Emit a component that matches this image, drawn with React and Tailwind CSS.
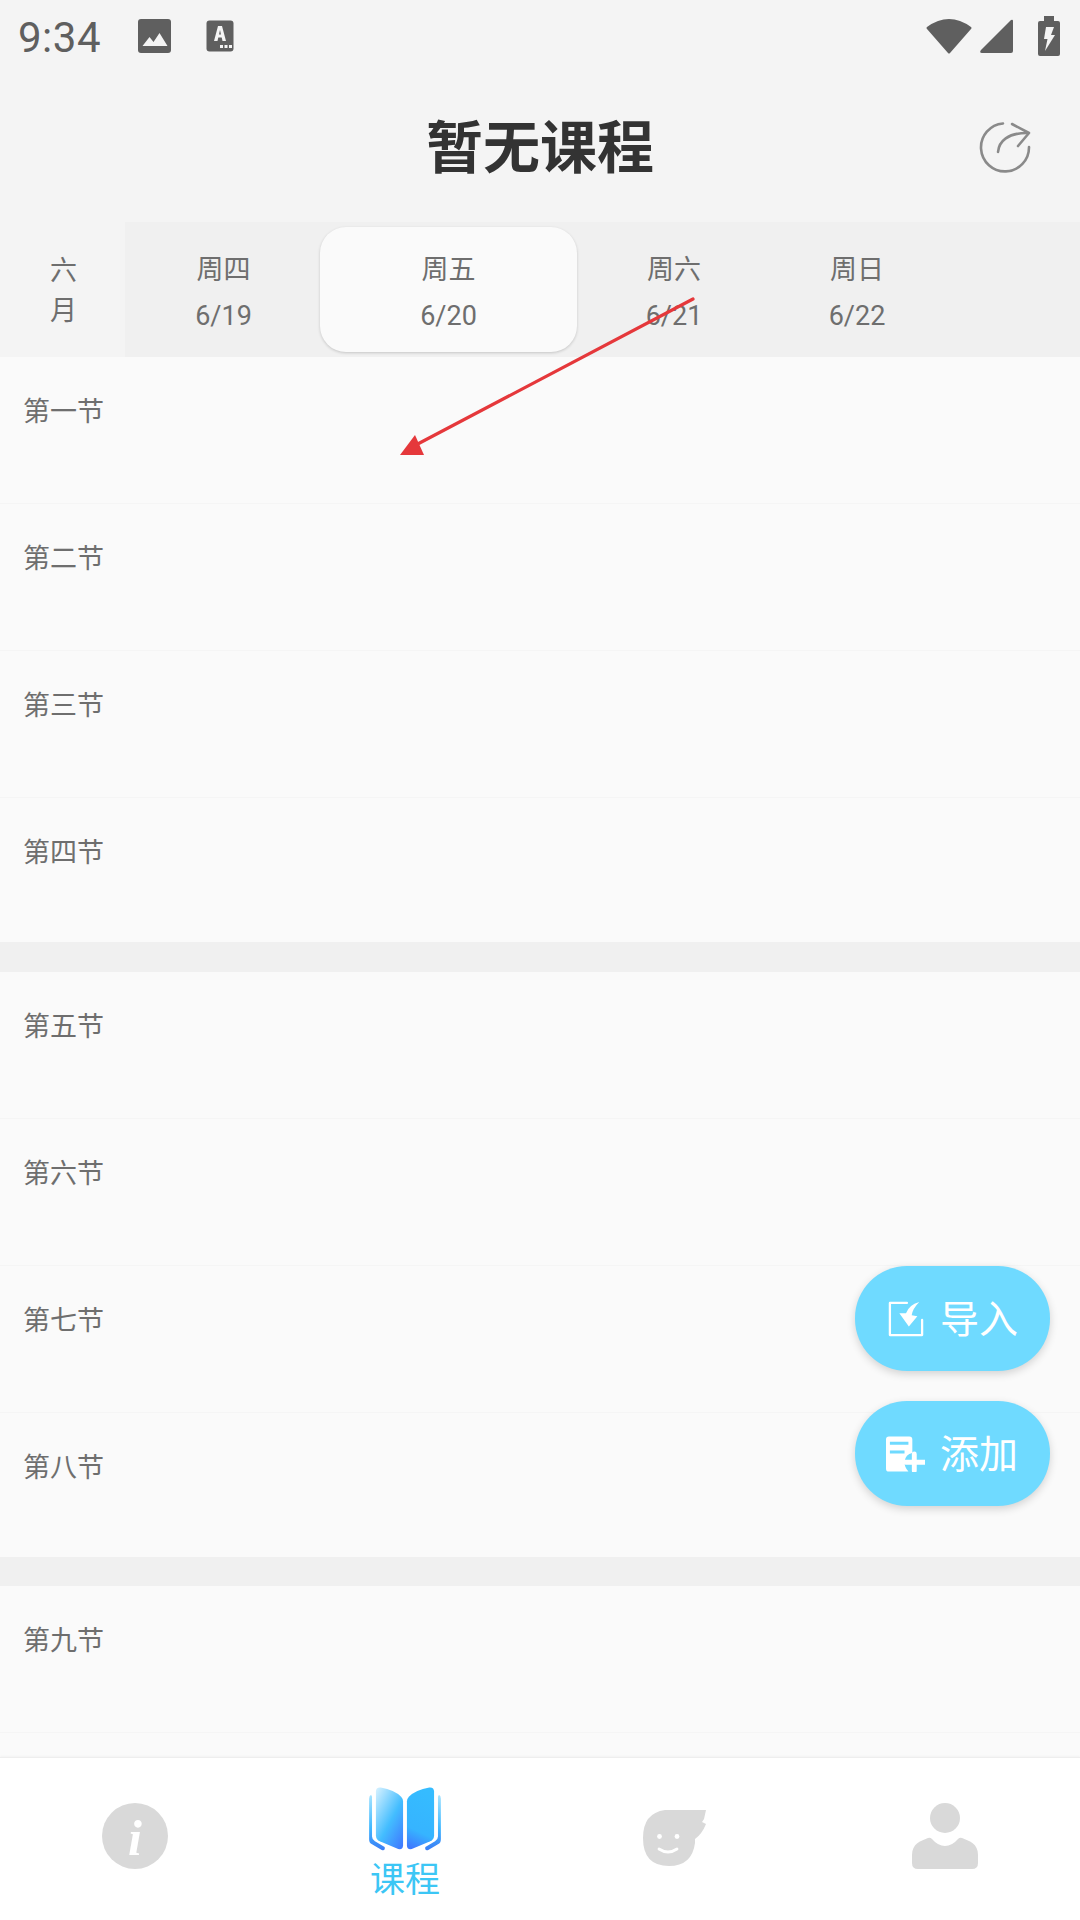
import React from 'react';

const cjk = "font-['Roboto','Noto_Sans_CJK_SC',sans-serif]";

function StatusBar() {
  return (
    <div className="h-[72px] flex items-center pl-[18px] pr-[20px] text-[#5f5f5f]">
      <span className="text-[42px] leading-none font-['Roboto',sans-serif] tracking-[0.5px] mt-[4px]">9:34</span>
      <svg className="ml-[36px]" width="35" height="36" viewBox="0 0 34 36">
        <rect x="0.5" y="1" width="33" height="34" rx="3" fill="#5f5f5f" />
        <path d="M5 28 L12 19 L16 24 L22 15 L30 28 Z" fill="#f4f4f4" />
      </svg>
      <svg className="ml-[34px]" width="28" height="32" viewBox="0 0 28 32">
        <rect x="0.5" y="0.5" width="27" height="31" rx="3" fill="#5f5f5f" />
        <path d="M8 21 L12 6 H16 L20 21 H16.5 L15.7 17.5 H12.3 L11.5 21 Z M13 14.5 H15 L14 10 Z" fill="#f4f4f4" fillRule="evenodd" />
        <path d="M14 25 h3 v3 h-3z M18.5 25 h3 v3 h-3z M23 25 h3 v3 h-3z" fill="#f4f4f4" />
      </svg>
      <div className="ml-auto flex items-center">
        <svg width="46" height="38" viewBox="0 0 46 38">
          <path d="M1 10 Q23 -6 45 10 Q46 11 45 12 L24 36 Q23 37 22 36 L1 12 Q0 11 1 10 Z" fill="#5f5f5f" />
        </svg>
        <svg className="ml-[8px]" width="34" height="36" viewBox="0 0 34 36">
          <path d="M1 32 L31 2 Q33 1 33 3 V33 Q33 35 31 35 H2 Q-1 35 1 32 Z" fill="#5f5f5f" />
        </svg>
        <svg className="ml-[24px]" width="22" height="40" viewBox="0 0 22 40">
          <path d="M6 0 H16 V5 H20 Q22 5 22 7 V38 Q22 40 20 40 H2 Q0 40 0 38 V7 Q0 5 2 5 H6 Z" fill="#5f5f5f" />
          <path d="M8 11 H16 L13 19 H17 L7 35 L9.5 23 H6 Z" fill="#f4f4f4" />
        </svg>
      </div>
    </div>
  );
}

function Header() {
  return (
    <div className="h-[150px] relative flex items-center justify-center">
      <span className={`text-[57px] leading-none font-bold text-[#333333] mt-[3px] ${cjk}`}>暂无课程</span>
      <svg className="absolute right-[48px] top-[49px]" width="54" height="54" viewBox="0 0 54 54" fill="none" stroke="#8a8a8a" strokeWidth="2.6" strokeLinecap="round">
        <path d="M25 2.5 A24 24 0 1 0 51 26" />
        <path d="M34 3 L51 12 L40 25" strokeLinejoin="round" />
        <path d="M20 31 C21 20 30 12 49 12" />
      </svg>
    </div>
  );
}

function WeekStrip() {
  return (
    <div className={`h-[135px] flex text-[#6e6e6e] ${cjk}`}>
      <div className="w-[125px] flex flex-col items-center justify-center text-[27px] leading-[40px] pt-[2px] pl-[2px] shrink-0">
        <span>六</span>
        <span>月</span>
      </div>
      <div className="flex-1 flex bg-[#f0f0f0]">
        <DayCell width="w-[195px] pl-[2px]" day="周四" date="6/19" />
        <div className="w-[257px] h-[125px] mt-[5px] rounded-[26px] bg-[#fafafa] shadow-[0_1px_3px_rgba(0,0,0,0.18)]">
          <DayText day="周五" date="6/20" top="pt-[25px]" />
        </div>
        <DayCell width="w-[192px] pl-[2px]" day="周六" date="6/21" />
        <DayCell width="w-[175px] pl-[1px]" day="周日" date="6/22" />
      </div>
    </div>
  );
}

function DayCell({ width, day, date }) {
  return (
    <div className={width}>
      <DayText day={day} date={date} top="pt-[30px]" />
    </div>
  );
}

function DayText({ day, date, top }) {
  return (
    <div className={`flex flex-col items-center ${top}`}>
      <span className="text-[27px] leading-[36px]">{day}</span>
      <span className="text-[27px] leading-[36px] mt-[10px]">{date}</span>
    </div>
  );
}

// the last row of a block is a little shorter than the others
function Row({ label, last }) {
  return (
    <div className={`${last ? 'h-[144px]' : 'h-[147px] border-b border-[#f5f5f5]'} bg-[#fafafa] pl-[23px] pt-[37px] text-[27px] leading-[36px] text-[#6e6e6e] ${cjk}`}>
      {label}
    </div>
  );
}

function Fab({ label, children }) {
  return (
    <div className={`w-[195px] h-[105px] rounded-[52px] bg-[#6fdaff] shadow-[0_3px_8px_rgba(0,0,0,0.16)] flex items-center pl-[31px] text-white text-[39px] leading-none ${cjk}`}>
      <div className="w-[39px] flex justify-center">{children}</div>
      <span className="ml-[15px] mt-[3px]">{label}</span>
    </div>
  );
}

function BookIcon() {
  return (
    <svg width="72" height="64" viewBox="0 0 74 66">
      <defs>
        <linearGradient id="pageL" x1="0.1" y1="0" x2="0.9" y2="1">
          <stop offset="0" stopColor="#cdeeff" />
          <stop offset="0.55" stopColor="#43bdff" />
          <stop offset="1" stopColor="#3f7bff" />
        </linearGradient>
        <linearGradient id="pageR" x1="0.5" y1="0" x2="0.3" y2="1">
          <stop offset="0" stopColor="#35bcff" />
          <stop offset="0.7" stopColor="#36b4ff" />
          <stop offset="1" stopColor="#3f7bff" />
        </linearGradient>
        <linearGradient id="back" x1="0" y1="0" x2="0" y2="1">
          <stop offset="0" stopColor="#a8e4ff" />
          <stop offset="0.6" stopColor="#40b8ff" />
          <stop offset="1" stopColor="#3a7cf5" />
        </linearGradient>
      </defs>
      <path d="M2 8 Q0 9 0 12 V54 Q0 58 3 59 L13 65 Q17 66 16 62 L6 56 Q3 54 3 51 V10 Z" fill="url(#back)" />
      <path d="M72 8 Q74 9 74 12 V54 Q74 58 71 59 L61 65 Q57 66 58 62 L68 56 Q71 54 71 51 V10 Z" fill="url(#back)" />
      <path d="M7 5 Q7 0 12 0.5 Q26 3 33 10 Q35 12 35 15 V60 Q35 65 30 64 L11 56 Q7 54 7 50 Z" fill="url(#pageL)" />
      <path d="M67 5 Q67 0 62 0.5 Q48 3 41 10 Q39 12 39 15 V60 Q39 65 44 64 L63 56 Q67 54 67 50 Z" fill="url(#pageR)" />
    </svg>
  );
}

function TabBar() {
  return (
    <div className="h-[163px] shrink-0 bg-white border-t border-[#eeeeee] grid grid-cols-4 shadow-[0_-1px_2px_rgba(0,0,0,0.03)]">
      <div className="flex justify-center pt-[45px]">
        <svg width="66" height="66" viewBox="0 0 66 66">
          <circle cx="33" cy="33" r="33" fill="#d9d9d9" />
          <text x="33" y="52" textAnchor="middle" fill="#ffffff" fontSize="50" fontStyle="italic" fontWeight="700" fontFamily="Liberation Serif, serif">i</text>
        </svg>
      </div>
      <div className="flex flex-col items-center pt-[29px]">
        <BookIcon />
        <span className={`text-[35px] leading-[35px] mt-[12px] text-[#3cc6f5] ${cjk}`}>课程</span>
      </div>
      <div className="flex justify-center pt-[52px]">
        <svg width="66" height="56" viewBox="0 0 66 56">
          <path d="M23 0 H64 L62 9 L60 12 L64 14 Q60 24 53 29 Q53 31 53 33 Q50 56 27 56 Q1 56 1 28 Q1 3 23 0 Z" fill="#d9d9d9" />
          <circle cx="17.5" cy="26.5" r="2.4" fill="#ffffff" />
          <circle cx="35" cy="26.5" r="2.4" fill="#ffffff" />
          <path d="M17 39 Q26 45 35 39" fill="none" stroke="#ffffff" strokeWidth="2.8" strokeLinecap="round" />
        </svg>
      </div>
      <div className="flex justify-center pt-[45px]">
        <svg width="66" height="66" viewBox="0 0 66 66">
          <circle cx="33" cy="15" r="15" fill="#d9d9d9" />
          <path d="M0 52 C0 41 8 38 16 35 Q18 34 20 36 Q26 43 33 43 Q40 43 46 36 Q48 34 50 35 C58 38 66 41 66 52 V60 Q66 66 60 66 H6 Q0 66 0 60 Z" fill="#d9d9d9" />
        </svg>
      </div>
    </div>
  );
}

function Gap() {
  return <div className="h-[29.5px] bg-[#f0f0f0]" />;
}

export default function App() {
  return (
    <div className="relative w-[1080px] h-[1920px] overflow-hidden flex flex-col bg-[#f4f4f4]">
      <StatusBar />
      <Header />
      <WeekStrip />

      {/* course rows, clipped by the tab bar */}
      <div className="flex-1 overflow-hidden">
        <Row label="第一节" />
        <Row label="第二节" />
        <Row label="第三节" />
        <Row label="第四节" last />
        <Gap />
        <Row label="第五节" />
        <Row label="第六节" />
        <Row label="第七节" />
        <Row label="第八节" last />
        <Gap />
        <Row label="第九节" />
        <Row />
      </div>

      <TabBar />

      {/* floating buttons */}
      <div className="absolute left-[855px] top-[1266px] flex flex-col gap-[30px]">
        <Fab label="导入">
          <svg width="38" height="36" viewBox="0 0 38 38" fill="none">
            <path d="M20 2 H2 V36 H36 V20" stroke="#ffffff" strokeWidth="2.4" strokeLinecap="round" strokeLinejoin="round" />
            <path d="M33 1 Q22 4 19 13 L12 13 L22 27 L31 16 L25 15 Q26 8 33 1 Z" fill="#ffffff" />
          </svg>
        </Fab>
        <Fab label="添加">
          <svg width="40" height="36" viewBox="0 0 40 36">
            <path d="M3 0 H24 Q27 0 27 3 V17 Q20 18 19 26 Q19 32 23 36 H3 Q0 36 0 33 V3 Q0 0 3 0 Z" fill="#ffffff" />
            <path d="M4 7 H23 M4 16 H19" stroke="#6fdaff" strokeWidth="3" />
            <path d="M29 18 V35 M20 26.5 H40" stroke="#ffffff" strokeWidth="5" strokeLinecap="round" />
          </svg>
        </Fab>
      </div>

      {/* red annotation arrow */}
      <svg className="absolute left-0 top-0 pointer-events-none" width="1080" height="1920">
        <line x1="693" y1="299" x2="412" y2="447" stroke="#e5383b" strokeWidth="3.2" strokeLinecap="round" />
        <path d="M400 455 L424 455 L415 435 Z" fill="#e5383b" />
      </svg>
    </div>
  );
}
